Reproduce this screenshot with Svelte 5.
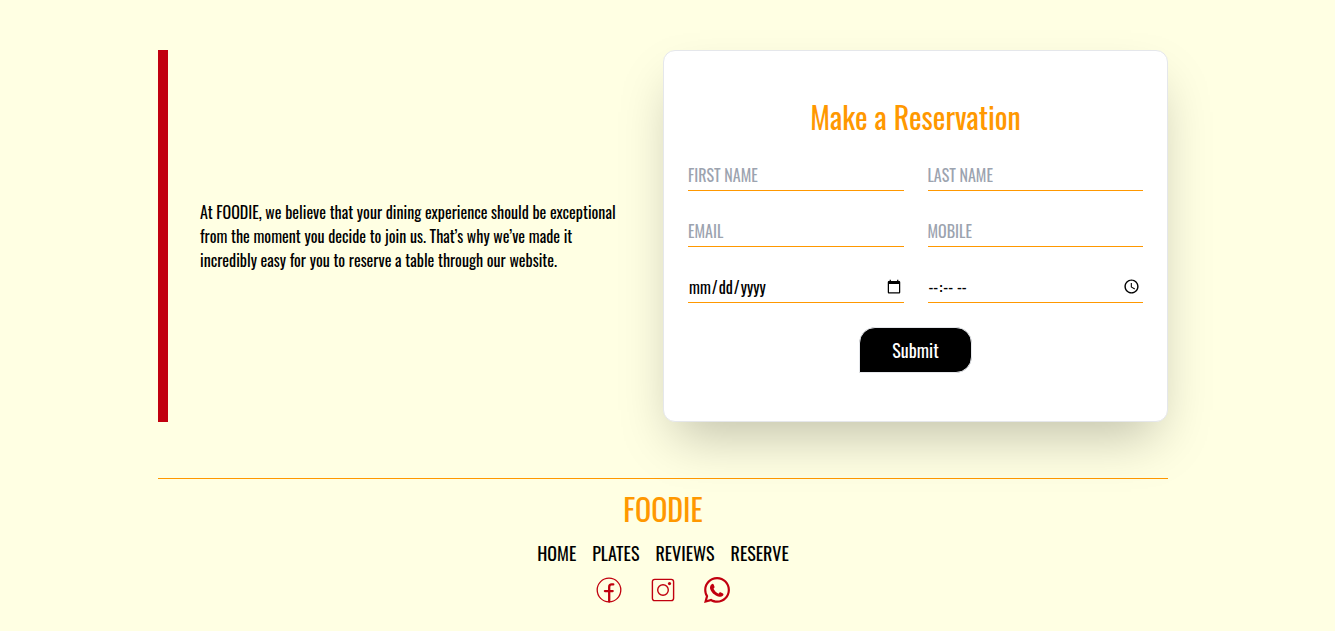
<script>
  const textFields = [
    { id: 'first', label: 'FIRST NAME', type: 'text' },
    { id: 'last', label: 'LAST NAME', type: 'text' },
    { id: 'email', label: 'EMAIL', type: 'email' },
    { id: 'mobile', label: 'MOBILE', type: 'tel' }
  ];
  const links = ['HOME', 'PLATES', 'REVIEWS', 'RESERVE'];
</script>

<div class="page">
  <section class="reserve">
    <div class="intro">
      <p>
        At FOODIE, we believe that your dining experience should be exceptional
        from the moment you decide to join us. That’s why we’ve made it
        incredibly easy for you to reserve a table through our website.
      </p>
    </div>
    <form class="card" onsubmit={(e) => e.preventDefault()}>
      <h2>Make a Reservation</h2>
      <div class="fields">
        {#each textFields as f}
          <input id={f.id} type={f.type} placeholder={f.label} aria-label={f.label} />
        {/each}
        <input id="date" type="date" aria-label="Date" />
        <input id="time" type="time" aria-label="Time" />
      </div>
      <button type="submit">Submit</button>
    </form>
  </section>

  <footer>
    <h2>FOODIE</h2>
    <nav>
      {#each links as l}
        <a href={'#' + l.toLowerCase()}>{l}</a>
      {/each}
    </nav>
    <div class="social">
      <a href="#facebook" aria-label="Facebook">
        <svg width="26" height="26" viewBox="0 0 26 26" fill="none" stroke="currentColor">
          <circle cx="13" cy="13" r="11.8" stroke-width="1.3" />
          <path d="M17.3 7.4h-1.6c-1.6 0-2.5 1-2.5 2.6V24.5M8.9 14.1h7.8" stroke-width="2.3" stroke-linecap="round" />
        </svg>
      </a>
      <a href="#instagram" aria-label="Instagram">
        <svg width="26" height="26" viewBox="0 0 26 26" fill="none" stroke="currentColor">
          <rect x="2.4" y="2.4" width="21.2" height="21.2" rx="2.4" stroke-width="1.4" />
          <circle cx="13" cy="13" r="5.3" stroke-width="1.4" />
          <circle cx="19.5" cy="6.6" r="1.6" fill="currentColor" stroke="none" />
        </svg>
      </a>
      <a href="#whatsapp" aria-label="WhatsApp">
        <svg width="26" height="26" viewBox="2 2 20 20" fill="currentColor">
          <path d="M19.05 4.91A9.816 9.816 0 0 0 12.04 2c-5.46 0-9.91 4.45-9.91 9.91 0 1.75.46 3.45 1.32 4.95L2.05 22l5.25-1.38c1.45.79 3.08 1.21 4.74 1.21 5.46 0 9.91-4.45 9.91-9.91 0-2.65-1.03-5.14-2.9-7.01zm-7.01 15.24c-1.48 0-2.93-.4-4.2-1.15l-.3-.18-3.12.82.83-3.04-.2-.31a8.264 8.264 0 0 1-1.26-4.38c0-4.54 3.7-8.24 8.24-8.24 2.2 0 4.27.86 5.82 2.42a8.183 8.183 0 0 1 2.41 5.83c.02 4.54-3.68 8.23-8.22 8.23z" />
          <path d="M7.9 7.5q1.1-.6 1.600.4l.6 1.600q.2.600-.8 1.600c.9 1.800 2.100 3 3.900 3.700.8-.9 1-1.200 1.500-1l1.900.9c.6.300.4 1.200-.1 1.700-.8.800-1.800 1-2.900.7-3.500-.9-6.100-3.300-6.900-6.100-.3-1.300.2-2.800 1.200-3.500z" />
        </svg>
      </a>
    </div>
  </footer>
</div>

<style>
  :global(body) {
    margin: 0;
    background: #ffffe3;
  }
  .page {
    box-sizing: border-box;
    max-width: 1041px;
    margin: 0 auto;
    padding: 50px 20px 24px 11px;
    font-family: Oswald, 'Liberation Sans Narrow', 'Open Sans Condensed', 'Liberation Sans', sans-serif;
    color: #000;
  }
  .reserve {
    display: grid;
    grid-template-columns: 1fr 1fr;
  }
  .intro {
    display: flex;
    align-items: center;
    border-left: 10px solid #c1000f;
    padding: 0 32px;
  }
  p {
    margin: 0;
    font-size: 16px;
    line-height: 24px;
  }
  .card {
    display: flex;
    flex-direction: column;
    align-items: center;
    padding: 48px 24px;
    background: #fff;
    border: 1px solid #e5e7eb;
    border-radius: 12px;
    box-shadow: 0 25px 50px -12px rgba(0, 0, 0, 0.25);
  }
  h2 {
    margin: 0;
    font-size: 30px;
    line-height: 36px;
    font-weight: 400;
    color: #ff9800;
  }
  .fields {
    display: grid;
    grid-template-columns: 1fr 1fr;
    gap: 24px;
    width: 100%;
    margin: 24px 0;
  }
  input {
    box-sizing: border-box;
    width: 100%;
    min-width: 0;
    height: 32px;
    padding: 0;
    border: 0;
    border-bottom: 1px solid #ff9800;
    background: transparent;
    font-family: inherit;
    font-size: 16px;
    line-height: 24px;
    color: #000;
    outline: none;
  }
  input::placeholder {
    color: #9ca3af;
    opacity: 1;
  }
  button {
    height: 46px;
    padding: 0 32px;
    border: 1px solid #e5e7eb;
    border-radius: 16px 16px 16px 0;
    background: #000;
    color: #fff;
    font-family: inherit;
    font-size: 18px;
    line-height: 28px;
  }
  footer {
    display: flex;
    flex-direction: column;
    align-items: center;
    margin-top: 56px;
    padding-top: 12px;
    border-top: 1px solid #ff9800;
  }
  nav {
    display: flex;
    gap: 16px;
    margin-top: 12px;
    font-size: 18px;
    line-height: 28px;
  }
  nav a {
    color: #000;
    text-decoration: none;
  }
  .social {
    display: flex;
    align-items: center;
    gap: 28px;
    height: 30px;
    margin-top: 8px;
  }
  .social a {
    display: flex;
    color: #c1000f;
  }
</style>
